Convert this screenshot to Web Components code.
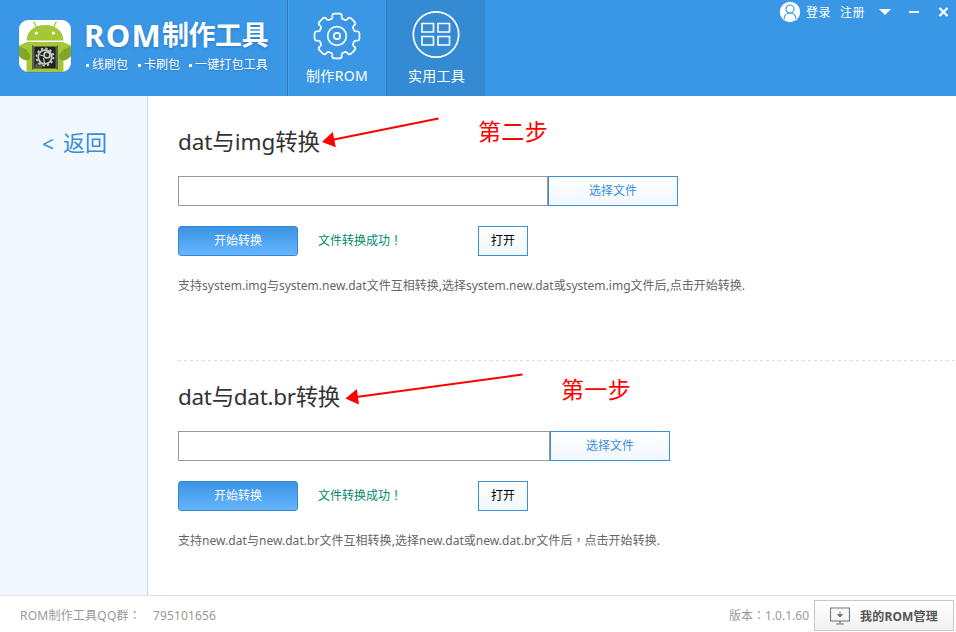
<!DOCTYPE html>
<html lang="zh-CN">
<head>
<meta charset="utf-8">
<title>ROM制作工具</title>
<style>
html,body{margin:0;height:100%;overflow:hidden}
body{font-family:"Noto Sans","Noto Sans CJK SC",sans-serif;font-size:12px;color:#666;background:#fff}
</style>
</head>
<body>
<rom-app></rom-app>
<script>
function define(name, html, after) {
  const t = document.createElement('template');
  t.innerHTML = html;
  customElements.define(name, class extends HTMLElement {
    connectedCallback() {
      if (this.shadowRoot) return;
      this.attachShadow({mode: 'open'}).append(t.content.cloneNode(true));
      if (after) after(this, this.shadowRoot);
    }
  });
}

/* One line of text tracked so that it spans the width given in "w" */
define('fit-text', `<style>:host{display:inline-block;white-space:pre;flex:none}span{display:inline-block}::slotted(b){font-weight:inherit;font-family:"Noto Sans CJK TC",sans-serif;line-height:1}</style><span><slot></slot></span>`, (el, root) => {
  const s = root.querySelector('span'), w = +el.getAttribute('w');
  const n = [...el.textContent].length;
  const natural = s.getBoundingClientRect().width;
  s.style.letterSpacing = ((w - natural) / n).toFixed(3) + 'px';
  el.style.width = w + 'px';
});

define('app-logo', `<style>:host{display:block;width:54px;height:54px;flex:none}svg{display:block}</style>
<svg width="54" height="54" viewBox="0 0 54 54">
<defs><clipPath id="c"><rect x="1" y="1" width="52" height="52" rx="9"/></clipPath></defs>
<rect x="0.5" y="1" width="53" height="53" rx="9.5" fill="#2f7fc4" opacity=".45"/>
<g clip-path="url(#c)">
<rect width="54" height="54" fill="#fff"/>
<path d="M15.500 2.500L19 9M38.500 2.500L35 9" stroke="#9fc63b" stroke-width="1.300"/>
<path d="M8.500 21.500C9 12 16 6 27 6s18 6 18.500 15.500z" fill="#a4c639"/>
<circle cx="18.300" cy="14" r="1.600" fill="#fff"/><circle cx="35.300" cy="14" r="1.600" fill="#fff"/>
<path d="M0 27l9-4h36l9 4v8H45.500v19H8.500V35H0z" fill="#a4c639"/>
<path d="M0 27l8 3 4 6q1 5-4 5.500Q4 41 0 36zM54 27l-8 3-5 6q-1 5 4 5.500Q50 41 54 36z" fill="#84a626"/>
<path d="M14 26l3 2v21l-3 2zM40 26l-3 2v21l3 2z" fill="#5d614f"/>
<rect x="16.500" y="27.500" width="21" height="22" fill="#20221c"/>
<path d="M17 46l4-4 5 3-3 5h-6z" fill="#777b70" opacity=".6"/>
<circle cx="27" cy="38" r="6.800" fill="none" stroke="#c4c6c2" stroke-width="1.800"/>
<circle cx="27" cy="38" r="8.500" fill="none" stroke="#c4c6c2" stroke-width="1.800" stroke-dasharray="2.400 2.050"/>
<circle cx="29" cy="36" r="3" fill="#30322b" stroke="#d2d4d0" stroke-width="1.600"/>
<path d="M25.500 39l1 5M22 36l4 1" stroke="#c4c6c2" stroke-width="1.200"/>
</g></svg>`);

define('app-brand', `<style>
:host{display:flex;width:287px;height:96px;box-sizing:border-box;padding:19px 0 0 18px;color:#fff}
.t{padding:0 0 0 12px;display:flex;flex-direction:column}
.n{display:flex;align-items:center;font-weight:700;height:32px;line-height:32px;text-shadow:0 1px 3px #2c7cc2}
.r{font-size:31px}.z{font-size:27px}
.s{display:flex;line-height:18px;margin-top:5px;font-size:12px;text-shadow:0 1px 2px #2c7cc2;margin-left:2px}
.s div{display:flex;align-items:center;gap:3px}
.s div:nth-child(1){width:52px}.s div:nth-child(2){width:51px}
i{width:3px;height:3px;background:#fff;flex:none}
</style><app-logo></app-logo><div class="t">
<div class="n"><fit-text class="r" w="78">ROM</fit-text><fit-text class="z" w="106">制作工具</fit-text></div>
<div class="s"><div><i></i><fit-text w="36">线刷包</fit-text></div><div><i></i><fit-text w="36">卡刷包</fit-text></div><div><i></i><fit-text w="73">一键打包工具</fit-text></div></div></div>`);

define('nav-tab', `<style>
:host{display:flex;flex-direction:column;align-items:center;width:99px;height:96px;box-sizing:border-box;padding-top:11px;color:#fff;border-left:1px solid #3179b9;box-shadow:inset 1px 0 #4ba1ea}
:host([active]){background:#348ad3;width:99px;box-shadow:none}
.i{height:50px}.l{font-size:14px;line-height:20px;margin-top:5px}
:host([active]) .l{padding-left:1px}
</style><div class="i"><slot name="icon"></slot></div><div class="l"><slot></slot></div>`);

define('gear-icon', `<style>:host,svg{display:block}</style><svg width="50" height="50" viewBox="0 0 50 50" fill="none" stroke="#fff" stroke-width="1.700" stroke-linejoin="round"></svg>`, (el, root) => {
  const svg = root.querySelector('svg'), c = 25;
  const at = (r, a) => (c + r * Math.cos(a)).toFixed(2) + ' ' + (c + r * Math.sin(a)).toFixed(2);
  let d = '';
  for (let k = 0; k < 8; k++) {
    const a = -Math.PI / 2 + k * Math.PI / 4;
    d += (k ? 'L' : 'M') + at(18, a - .29) + 'Q' + at(19.2, a - .22) + ' ' + at(20.8, a - .23)
       + 'Q' + at(22.6, a - .22) + ' ' + at(22.6, a - .12) + 'L' + at(22.6, a + .12)
       + 'Q' + at(22.6, a + .22) + ' ' + at(20.8, a + .23) + 'Q' + at(19.2, a + .22) + ' ' + at(18, a + .29);
  }
  svg.innerHTML = `<path d="${d}Z"/><circle cx="25" cy="25" r="9.300"/><circle cx="25" cy="25" r="3.200"/>`;
});

define('grid-icon', `<style>:host,svg{display:block}</style><svg width="50" height="50" viewBox="0 0 50 50" fill="none" stroke="#fff" stroke-width="1.600"><circle cx="25" cy="23.500" r="22.700" stroke-width="1.700"/><path d="M11 12.500h11.500v8.500h-11.500zM27 12.500h11.500v8.500h-11.500zM11 25.500h11.500v8.500h-11.500zM27 25.500h11.500v8.500h-11.500z"/></svg>`);

define('user-bar', `<style>
:host{display:flex;margin-left:auto;height:24px;align-items:center;color:#fff;line-height:20px}
svg{display:block;flex:none}.a{margin-right:5px}fit-text{margin-right:9px;padding-top:1px}
.w{margin-right:-5px}
</style>
<svg class="a" width="22" height="22" viewBox="0 0 22 22"><circle cx="11" cy="11" r="10.200" fill="#fff"/><g fill="none" stroke="#3a97e6" stroke-width="1.200"><circle cx="11" cy="8" r="4"/><path d="M5 18c.3-4 2.400-6 6-6s5.700 2 6 6"/></g></svg>
<fit-text w="25">登录</fit-text><fit-text w="25">注册</fit-text>
<svg class="w" width="87" height="24" viewBox="0 0 87 24"><path d="M5 9h12l-6 6z" fill="#fff"/><path d="M35 12h10" stroke="#fff" stroke-width="2"/><path d="M65.500 8l8 8m0-8l-8 8" stroke="#fff" stroke-width="2.200"/></svg>`);

define('app-header', `<style>
:host{display:flex;height:96px;flex:none;background:#3a97e6}
</style><app-brand></app-brand>
<nav-tab><gear-icon slot="icon"></gear-icon><fit-text w="62">制作ROM</fit-text></nav-tab>
<nav-tab active><grid-icon slot="icon"></grid-icon><fit-text w="57">实用工具</fit-text></nav-tab>
<user-bar></user-bar>`);

define('side-bar', `<style>
:host{display:block;width:148px;box-sizing:border-box;flex:none;background:#f1f8ff;border-right:1px solid #bddae8;padding:28px 0 0 42px}
div{display:flex;align-items:center;height:36px;color:#3a8fd8;font-size:22px;line-height:36px}
.lt{font-size:21px;width:21px;padding-top:3px}
</style><div><span class="lt">&lt;</span><fit-text w="44">返回</fit-text></div>`);

define('line-button', `<style>
:host{display:flex;align-items:center;justify-content:center;box-sizing:border-box;height:30px;border:1px solid #3a8fd8;background:linear-gradient(#fff,#f0f7fe);color:#3a8fd8;line-height:18px;padding-bottom:1px;flex:none}
</style><slot></slot>`);
define('start-button', `<style>
:host{display:flex;align-items:center;justify-content:center;box-sizing:border-box;width:120px;height:30px;border:1px solid #3589d2;border-radius:3px;background:linear-gradient(#3a94e4,#66b5fd);color:#fff;line-height:18px;padding-bottom:1px;flex:none}
</style><slot></slot>`);

define('convert-panel', `<style>
:host{display:block;height:255px;box-sizing:border-box}
.title{display:flex;align-items:center;height:70px;box-sizing:border-box;padding-bottom:2px;font-size:22.5px;color:#333}
.file{display:flex;height:30px}
.in{box-sizing:border-box;height:30px;border:1px solid #999;background:#fff;flex:none}
.act{display:flex;align-items:center;margin-top:20px;height:30px}
.ok{color:#008a6c;margin-left:20px;width:160px;line-height:18px}
.act line-button{width:50px;color:#000}
.desc{margin-top:20px;line-height:20px;color:#666}
</style>
<div class="title"><slot name="title"></slot></div>
<div class="file"><div class="in"></div><line-button class="pick"><fit-text w="48">选择文件</fit-text></line-button></div>
<div class="act"><start-button><fit-text w="48">开始转换</fit-text></start-button>
<span class="ok"><fit-text w="84">文件转换成功<b lang="zh-TW">！</b></fit-text></span>
<line-button><fit-text w="24">打开</fit-text></line-button></div>
<div class="desc"><slot name="desc"></slot></div>`, (el, root) => {
  root.querySelector('.in').style.width = el.getAttribute('input') + 'px';
  root.querySelector('.pick').style.width = el.getAttribute('button') + 'px';
});

/* Red hand-placed arrow with its caption, laid over the page */
define('step-note', `<style>
:host{position:absolute;display:block;color:#f00;font:400 23px/30px "Liberation Serif","Noto Sans CJK SC",serif}
svg{display:block;overflow:visible}
.c{position:absolute;left:var(--cx);top:var(--cy)}
</style><svg width="220" height="40"><line stroke="#f00" stroke-width="2"/><polygon fill="#f00"/></svg><div class="c"><slot></slot></div>`, (el, root) => {
  const [x, y] = el.getAttribute('tail').split(',').map(Number);
  const [hx, hy] = el.getAttribute('tip').split(',').map(Number);
  const l = Math.hypot(x - hx, y - hy), ux = (x - hx) / l, uy = (y - hy) / l;
  const line = root.querySelector('line');
  Object.entries({x1: x, y1: y, x2: hx + ux * 11, y2: hy + uy * 11}).forEach(([k, v]) => line.setAttribute(k, v));
  const bx = hx + ux * 12.5, by = hy + uy * 12.5;
  root.querySelector('polygon').setAttribute('points', `${hx},${hy} ${bx - uy * 7.8},${by + ux * 7.8} ${bx + uy * 7.8},${by - ux * 7.8}`);
});

define('app-footer', `<style>
:host{display:flex;align-items:center;height:37px;box-sizing:border-box;flex:none;border-top:1px solid #e2e2e2;background:#fff;color:#999;padding:4px 2px 1px 20px;line-height:20px}
.q{margin-right:12px}.v{margin-left:auto;margin-right:5px}
.b{display:flex;align-items:center;width:140px;height:31px;box-sizing:border-box;border:1px solid #c6c6c6;background:linear-gradient(#fff,#f1f1f1);color:#555;font-weight:700;padding-left:15px}
.b fit-text{padding-top:2px}
svg{margin-right:10px;flex:none}
</style><fit-text class="q" w="121">ROM制作工具QQ群<b lang="zh-TW">：</b></fit-text><fit-text w="63">795101656</fit-text>
<fit-text class="v" w="80">版本<b lang="zh-TW">：</b>1.0.1.60</fit-text>
<div class="b"><svg width="20" height="18" viewBox="0 0 20 18"><path d="M.500 1h19v13h-19z" fill="none" stroke="#777" stroke-width="1.200"/><path d="M6 17h8M10 14v3" stroke="#777" stroke-width="1.200"/><path d="M10 4.500v5M7.500 7.500h5L10 10z" stroke="#777" stroke-width="1" fill="#777"/></svg><fit-text w="78">我的ROM管理</fit-text></div>`);

define('rom-app', `<style>
:host{display:flex;flex-direction:column;width:956px;height:632px;position:relative;overflow:hidden}
.m{display:flex;flex:1;min-height:0}
main{flex:1;padding:10px 0 0 30px;min-width:0;overflow:hidden}
.first{height:254px}
hr{margin:0;border:0;height:1px;background:repeating-linear-gradient(90deg,#ddd 0 3px,transparent 3px 6px)}
</style><app-header></app-header>
<div class="m"><side-bar></side-bar><main>
<convert-panel class="first" input="370" button="130"><fit-text slot="title" w="142">dat与img转换</fit-text><fit-text slot="desc" w="567">支持system.img与system.new.dat文件互相转换,选择system.new.dat或system.img文件后,点击开始转换.</fit-text></convert-panel>
<hr>
<convert-panel input="372" button="120"><fit-text slot="title" w="162">dat与dat.br转换</fit-text><fit-text slot="desc" w="482">支持new.dat与new.dat.br文件互相转换,选择new.dat或new.dat.br文件后<b lang="zh-TW">，</b>点击开始转换.</fit-text></convert-panel>
</main></div><app-footer></app-footer>
<step-note style="left:320px;top:110px;--cx:158px;--cy:8px" tail="118.5,8.5" tip="2,32"><fit-text w="70">第二步</fit-text></step-note>
<step-note style="left:340px;top:366px;--cx:221px;--cy:10px" tail="182.5,8.5" tip="5.500,32.5"><fit-text w="70">第一步</fit-text></step-note>`);
</script>
</body>
</html>
